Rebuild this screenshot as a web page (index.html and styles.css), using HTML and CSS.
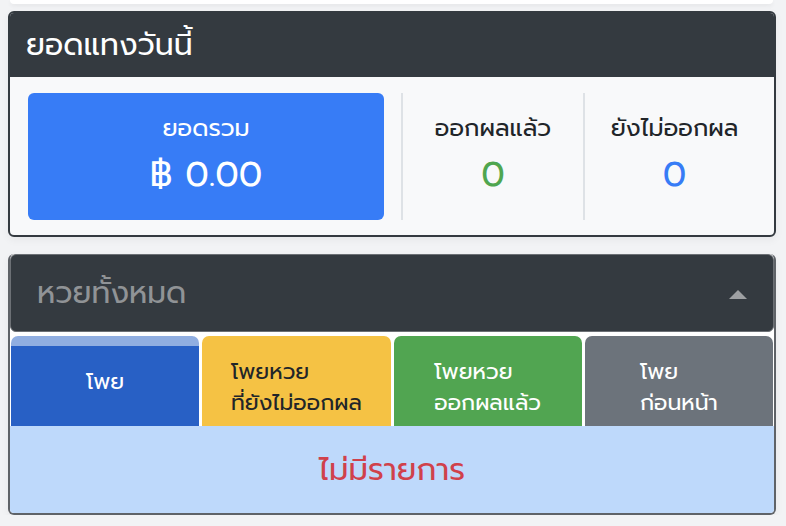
FILE: index.html
```html
<!DOCTYPE html>
<html>
<head>
    <meta charset="utf-8">
    <title>ยอดแทงวันนี้</title>
    <link rel="stylesheet" href="styles.css">
</head>
<body>
    <div class="top-card"></div>

    <div class="card summary-card">
        <div class="card-header">ยอดแทงวันนี้</div>
        <div class="summary-body">
            <div class="total-box">
                <div class="total-label">ยอดรวม</div>
                <div class="total-amount">฿ 0.00</div>
            </div>
            <div class="stat">
                <div class="stat-label">ออกผลแล้ว</div>
                <div class="stat-count done">0</div>
            </div>
            <div class="stat">
                <div class="stat-label">ยังไม่ออกผล</div>
                <div class="stat-count pending">0</div>
            </div>
        </div>
    </div>

    <div class="card lotto-card">
        <div class="lotto-header">
            <span>หวยทั้งหมด</span>
            <svg class="caret" width="18" height="9" viewBox="0 0 18 9">
                <polygon points="0,9 9,0 18,9" fill="currentColor"></polygon>
            </svg>
        </div>
        <div class="tabs">
            <div class="tab tab-active"><span>โพย</span></div>
            <div class="tab tab-warning"><span>โพยหวย<br>ที่ยังไม่ออกผล</span></div>
            <div class="tab tab-success"><span>โพยหวย<br>ออกผลแล้ว</span></div>
            <div class="tab tab-secondary"><span>โพย<br>ก่อนหน้า</span></div>
        </div>
        <div class="empty">ไม่มีรายการ</div>
    </div>
</body>
</html>
```

FILE: styles.css
```css
:root {
    --page-bg: #f2f3f5;
    --dark: #343a40;
    --light: #f8f9fa;
    --primary: #377cf6;
    --success: #4fa64f;
    --border-color: #dee2e6;
    --text-color: #212529;
}
* {
    box-sizing: border-box;
}
body {
    margin: 0;
    padding: 0;
    background-color: var(--page-bg);
    font-family: Prompt, "Noto Sans Thai", "Noto Sans", sans-serif;
    font-weight: 400;
    color: var(--text-color);
}
.top-card {
    height: 4px;
    margin: 0 13px 0 10px;
    background-color: #ffffff;
    border-radius: 0 0 6px 6px;
    box-shadow: 0 2px 4px rgba(0, 0, 0, 0.06);
}
.card {
    margin: 7px 10px 0 8px;
    border-radius: 6px;
    overflow: hidden;
    box-shadow: 0 3px 8px rgba(0, 0, 0, 0.05);
}
.summary-card {
    border: 2px solid var(--dark);
    background-color: var(--light);
}
.card-header {
    height: 64px;
    padding: 0 16px;
    display: flex;
    align-items: center;
    background-color: var(--dark);
    color: #ffffff;
    font-size: 30px;
}
.summary-body {
    display: grid;
    grid-template-columns: 373px 182px 1fr;
    padding: 16px 10px 15px 18px;
}
.total-box {
    height: 127px;
    margin-right: 17px;
    padding-bottom: 4px;
    border-radius: 6px;
    background-color: var(--primary);
    color: #ffffff;
    display: flex;
    flex-direction: column;
    align-items: center;
    justify-content: center;
}
.total-label,
.stat-label {
    font-size: 24px;
    line-height: 36px;
}
.total-amount,
.stat-count {
    margin-top: 4px;
    font-size: 35px;
    line-height: 50px;
}
.stat {
    padding-bottom: 4px;
    border-left: 2px solid var(--border-color);
    display: flex;
    flex-direction: column;
    align-items: center;
    justify-content: center;
}
.stat-count.done {
    color: var(--success);
}
.stat-count.pending {
    color: var(--primary);
}
.lotto-card {
    margin-top: 17px;
    border: 2px solid #5f6368;
    border-top: none;
    background-color: #ffffff;
}
.lotto-header {
    height: 78px;
    padding: 0 26px 0 26px;
    display: flex;
    align-items: center;
    justify-content: space-between;
    background-color: var(--dark);
    border: 1px solid #6c7075;
    border-radius: 6px;
    color: #909396;
    font-size: 30px;
}
.caret {
    margin-top: 2px;
    color: #9d9fa2;
}
.tabs {
    display: grid;
    grid-template-columns: repeat(4, 1fr);
    gap: 3px;
    padding: 4px 1px 0 1px;
}
.tab {
    height: 90px;
    padding-top: 11px;
    border-radius: 7px 7px 0 0;
    display: flex;
    align-items: center;
    justify-content: center;
    color: #ffffff;
    font-size: 22px;
    line-height: 31px;
}
.tab span {
    display: inline-block;
    text-align: left;
}
.tab-active {
    padding-top: 0;
    background: linear-gradient(#90aee1 10px, #2860c5 10px);
}
.tab-warning {
    background-color: #f5c244;
    color: var(--text-color);
}
.tab-success {
    background-color: #51a551;
}
.tab-secondary {
    background-color: #6c737b;
}
.empty {
    height: 87px;
    display: flex;
    align-items: center;
    justify-content: center;
    background-color: #bed9fb;
    color: #d0414b;
    font-size: 31px;
}
```
